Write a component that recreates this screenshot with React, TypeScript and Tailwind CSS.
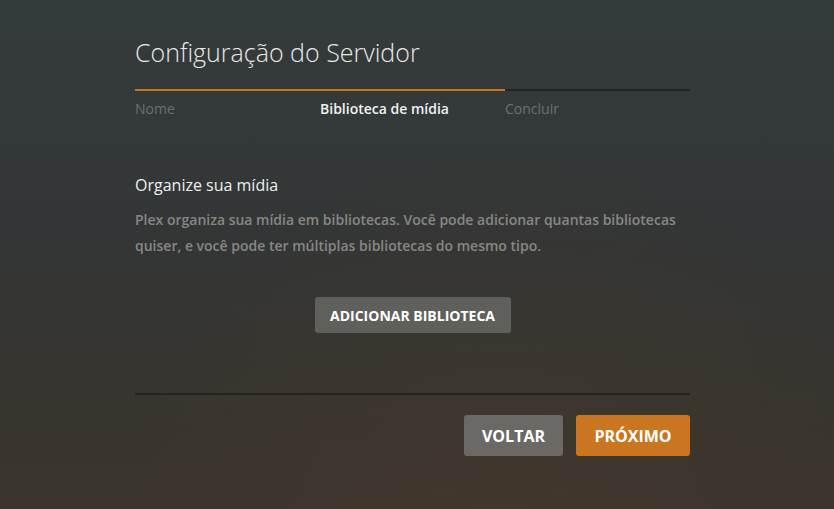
import React from 'react';

const steps = [
  { label: 'Nome', state: 'done' },
  { label: 'Biblioteca de mídia', state: 'active' },
  { label: 'Concluir', state: 'todo' },
];

const App = () => {
  return (
    <div className="relative min-h-[509px] w-full overflow-hidden bg-[linear-gradient(180deg,#343b3b_0%,#333636_45%,#38352f_80%,#3b352d_100%)] font-['Open_Sans',sans-serif]">
      {/* warm glow at the bottom */}
      <div className="pointer-events-none absolute inset-0 bg-[radial-gradient(ellipse_at_60%_115%,rgba(80,60,40,0.3),transparent_55%)]" />

      <div className="relative ml-[135px] w-[555px] pt-[35px]">
        <h1 className="text-[25px] leading-[34px] font-light text-[#e8e8e8]">
          Configuração do Servidor
        </h1>

        {/* progress */}
        <div className="mt-[20px] flex h-[2px] bg-[#232525]">
          <div className="w-[370px] bg-[#ca7620]" />
        </div>
        <div className="mt-[8px] grid grid-cols-3 text-[14px] leading-[20px]">
          {steps.map((s) => (
            <span
              key={s.label}
              className={
                s.state === 'active'
                  ? 'font-semibold text-[#f0f0f0]'
                  : 'text-[#6e7070]'
              }
            >
              {s.label}
            </span>
          ))}
        </div>

        <h2 className="mt-[55px] text-[16px] leading-[22px] text-[#eeeeee]">
          Organize sua mídia
        </h2>
        <p className="mt-[11px] text-[14px] leading-[26px] font-semibold text-[#878785]">
          Plex organiza sua mídia em bibliotecas. Você pode adicionar quantas bibliotecas
          quiser, e você pode ter múltiplas bibliotecas do mesmo tipo.
        </p>

        <div className="mt-[38px] flex justify-center">
          <button className="h-[36px] w-[196px] rounded-[3px] bg-[#5f5f5c] text-[14px] font-bold text-white">
            ADICIONAR BIBLIOTECA
          </button>
        </div>

        <div className="mt-[60px] h-[2px] bg-[#222322]" />

        <div className="mt-[20px] flex justify-end gap-[13px]">
          <button className="h-[41px] w-[99px] rounded-[3px] bg-[#6a6965] text-[16px] font-bold text-white">
            VOLTAR
          </button>
          <button className="h-[41px] w-[114px] rounded-[3px] bg-[#ca7620] text-[16px] font-bold text-white">
            PRÓXIMO
          </button>
        </div>
      </div>
    </div>
  );
};

export default App;
